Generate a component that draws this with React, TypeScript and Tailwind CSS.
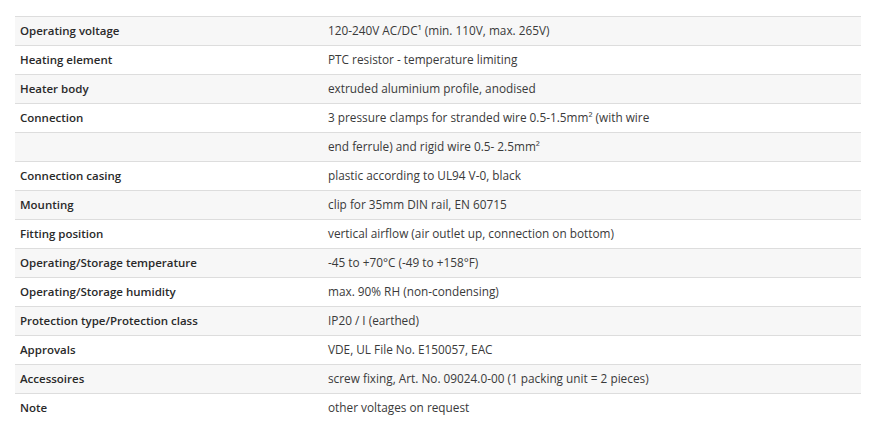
import React from "react";

const rows: [string, React.ReactNode][] = [
  ["Operating voltage", <>120-240V AC/DC¹ (min. 110V, max. 265V)</>],
  ["Heating element", "PTC resistor - temperature limiting"],
  ["Heater body", "extruded aluminium profile, anodised"],
  ["Connection", "3 pressure clamps for stranded wire 0.5-1.5mm² (with wire"],
  ["", "end ferrule) and rigid wire 0.5- 2.5mm²"],
  ["Connection casing", "plastic according to UL94 V-0, black"],
  ["Mounting", "clip for 35mm DIN rail, EN 60715"],
  ["Fitting position", "vertical airflow (air outlet up, connection on bottom)"],
  ["Operating/Storage temperature", "-45 to +70°C (-49 to +158°F)"],
  ["Operating/Storage humidity", "max. 90% RH (non-condensing)"],
  ["Protection type/Protection class", "IP20 / I (earthed)"],
  ["Approvals", "VDE, UL File No. E150057, EAC"],
  ["Accessoires", "screw fixing, Art. No. 09024.0-00 (1 packing unit = 2 pieces)"],
  ["Note", "other voltages on request"],
];

export default function App() {
  return (
    <div className="w-[873px] h-[429px] bg-white pt-[16px] pl-[15px]" style={{ fontFamily: '"Open Sans", "Noto Sans", sans-serif' }}>
      <div className="w-[846px] flex flex-col">
        {rows.map(([label, value], i) => (
          <div
            key={i}
            className={`flex h-[29px] items-center ${i % 2 === 0 ? "bg-[#f7f7f7]" : "bg-white"} border-t border-[#dddddd]`}
          >
            <div className="w-[308px] pl-[5px] text-[11.5px] font-semibold text-[#2a2a2a]">{label}</div>
            <div className="flex-1 pl-[5px] text-[11.8px] text-[#3a3a3a]">{value}</div>
          </div>
        ))}
      </div>
    </div>
  );
}
